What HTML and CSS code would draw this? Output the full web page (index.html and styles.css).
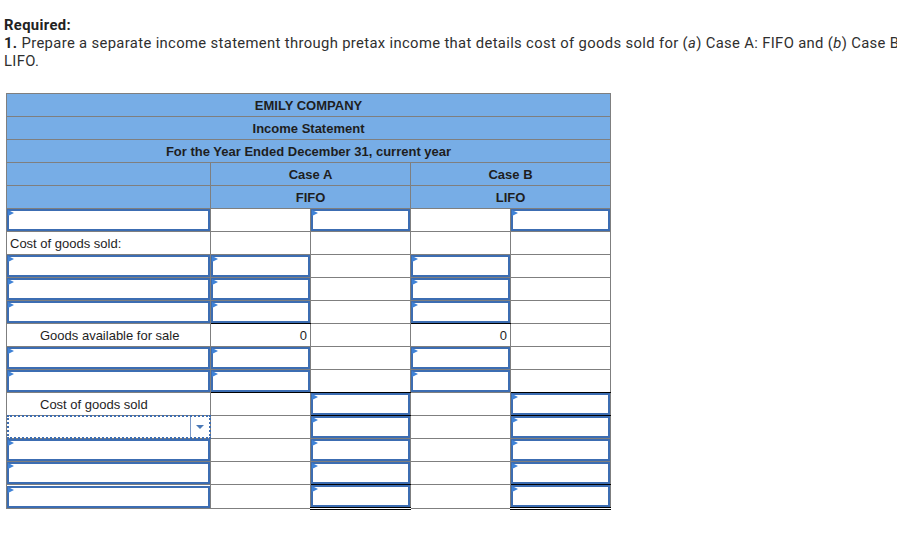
FILE: index.html
```html
<!DOCTYPE html>
<html>
<head>
<meta charset="utf-8">
<link rel="stylesheet" href="styles.css">
</head>
<body>
<div class="page">
  <p class="req"><b>Required:</b><br><b>1.</b> Prepare a separate income statement through pretax income that details cost of goods sold for (<i>a</i>) Case A: FIFO and (<i>b</i>) Case B <span class="nl">LIFO.</span></p>

  <table class="is">
    <colgroup>
      <col class="c-label"><col class="c-num"><col class="c-num"><col class="c-num"><col class="c-num">
    </colgroup>
    <tr class="h"><td colspan="5">EMILY COMPANY</td></tr>
    <tr class="h"><td colspan="5">Income Statement</td></tr>
    <tr class="h"><td colspan="5">For the Year Ended December 31, current year</td></tr>
    <tr class="h"><td></td><td colspan="2">Case A</td><td colspan="2">Case B</td></tr>
    <tr class="h"><td></td><td colspan="2">FIFO</td><td colspan="2">LIFO</td></tr>

    <tr><td><div class="box"></div></td><td></td><td><div class="box"></div></td><td></td><td><div class="box"></div></td></tr>
    <tr><td class="lbl">Cost of goods sold:</td><td></td><td></td><td></td><td></td></tr>
    <tr><td><div class="box"></div></td><td><div class="box"></div></td><td></td><td><div class="box"></div></td><td></td></tr>
    <tr><td><div class="box"></div></td><td><div class="box"></div></td><td></td><td><div class="box"></div></td><td></td></tr>
    <tr><td><div class="box"></div></td><td class="ul"><div class="box"></div></td><td></td><td class="ul"><div class="box"></div></td><td></td></tr>
    <tr><td class="lbl ind">Goods available for sale</td><td class="num">0</td><td></td><td class="num">0</td><td></td></tr>
    <tr><td><div class="box"></div></td><td><div class="box"></div></td><td></td><td><div class="box"></div></td><td></td></tr>
    <tr><td><div class="box"></div></td><td class="ul"><div class="box"></div></td><td class="ul"></td><td><div class="box"></div></td><td class="ul"></td></tr>
    <tr><td class="lbl ind">Cost of goods sold</td><td></td><td class="ul"><div class="box"></div></td><td></td><td class="ul"><div class="box"></div></td></tr>
    <tr><td class="selcell"><div class="dd"><span class="ddbtn"><span class="arrow"></span></span></div></td><td></td><td><div class="box"></div></td><td></td><td><div class="box"></div></td></tr>
    <tr><td><div class="box"></div></td><td></td><td><div class="box"></div></td><td></td><td><div class="box"></div></td></tr>
    <tr><td><div class="box"></div></td><td></td><td class="ul"><div class="box"></div></td><td></td><td class="ul"><div class="box"></div></td></tr>
    <tr><td><div class="box"></div></td><td></td><td class="dbl"><div class="box"></div></td><td></td><td class="dbl"><div class="box"></div></td></tr>
  </table>
</div>
</body>
</html>
```

FILE: styles.css
```css
html, body {
  margin: 0;
  padding: 0;
  background: #ffffff;
  overflow: hidden;
}

.page {
  padding: 16px 0 0 4px;
  width: 940px;
}

.req {
  margin: 0;
  width: 920px;
  font-family: Roboto, "Liberation Sans", sans-serif;
  font-size: 14.8px;
  letter-spacing: 0.35px;
  line-height: 18px;
  color: #2f2f2f;
}

.req b {
  font-weight: 700;
  color: #222222;
}

.is {
  margin-top: 23px;
  margin-left: 2px;
  border-collapse: collapse;
  table-layout: fixed;
  width: 605px;
  font-family: "Liberation Sans", Arial, sans-serif;
  font-size: 13px;
  color: #1e1e1e;
}

.c-label { width: 204px; }
.c-num { width: 100px; }

.is td {
  border: 1px solid #7f7f7f;
  height: 22px;
  padding: 0;
  vertical-align: middle;
}

.is tr.h td {
  background: #77ade6;
  font-weight: 700;
  text-align: center;
}

.is td.lbl {
  padding-left: 3px;
  white-space: nowrap;
}

.is td.ind {
  padding-left: 33px;
}

.is td.num {
  text-align: right;
  padding-right: 3px;
}

.is td.ul {
  border-bottom-color: #000000;
}

.is td.dbl {
  border-bottom: 3px double #000000;
}

.box {
  position: relative;
  box-sizing: border-box;
  height: 22px;
  border: 2px solid #3c6db2;
  background: #ffffff;
}

.box::before {
  content: "";
  position: absolute;
  left: -1px;
  top: -1px;
  border-left: 6px solid #3f82d6;
  border-top: 3.5px solid transparent;
  border-bottom: 3.5px solid transparent;
}

.selcell {
  position: relative;
}

.dd {
  box-sizing: border-box;
  height: 24px;
  margin: -1px -1px -1px 0;
  border: 2px dotted #3c6db2;
  display: flex;
  justify-content: flex-end;
}

.ddbtn {
  width: 18px;
  border-left: 1px solid #7a98c6;
  display: flex;
  align-items: center;
  justify-content: center;
}

.arrow {
  width: 0;
  height: 0;
  border-top: 4px solid #4a78b6;
  border-left: 4px solid transparent;
  border-right: 4px solid transparent;
}
```
